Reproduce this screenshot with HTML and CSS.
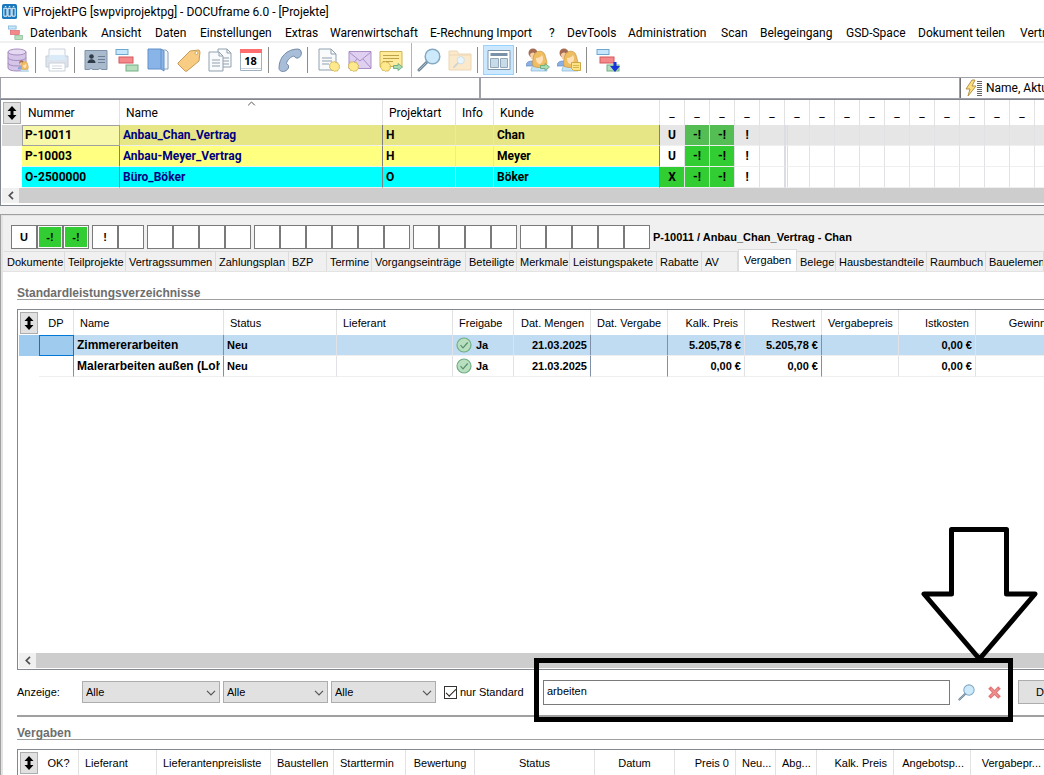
FILE: index.html
```html
<!DOCTYPE html>
<html lang="de">
  <head>
    <meta charset="utf-8" />
    <meta name="viewport" content="width=device-width, initial-scale=1.0" />
    <title>ViProjektPG - DOCUframe 6.0 - [Projekte]</title>
    <link rel="stylesheet" href="styles.css">
  </head>
  <body>
    <svg class="defs" width="0" height="0">
      <symbol id="gantt" viewBox="0 0 24 24">
        <rect x="1" y="1.5" width="12" height="5" fill="#c5e6fb" stroke="#6fa8cf" />
        <rect x="4" y="9" width="14" height="6" fill="#f4888a" stroke="#d2595c" />
        <rect x="11" y="17" width="12" height="6" fill="#b5dfbd" stroke="#75b083" />
      </symbol>
      <symbol id="lens" viewBox="0 0 24 24">
        <path d="M2 22 10 14" stroke="#6f8798" stroke-width="3" stroke-linecap="round" />
        <path d="M2 22 9 15" stroke="#a9c0d0" stroke-width="1" stroke-linecap="round" />
        <circle cx="15.500" cy="8.500" r="7.300" fill="#cdeafd" stroke="#84a9c2" stroke-width="1.500" />
      </symbol>
      <symbol id="sort" viewBox="0 0 9 14">
        <path d="M4.500 0 9 5H6v4h3l-4.500 5L0 9h3V5H0z" fill="#000" />
      </symbol>
      <symbol id="check" viewBox="0 0 16 16">
        <circle cx="8" cy="8" r="7" fill="#b9dfbe" stroke="#6fae86" stroke-width="1.200" />
        <path d="M4.500 8.200 7 10.800 11.700 5.500" fill="none" stroke="#549070" stroke-width="1.200" />
      </symbol>
      <symbol id="chevron" viewBox="0 0 10 6">
        <path d="M1 .8 5 4.800 9 .8" fill="none" stroke="#555" stroke-width="1.200" />
      </symbol>
      <symbol id="left" viewBox="0 0 6 9">
        <path d="M5 .8 1.300 4.500 5 8.200" fill="none" stroke="#505050" stroke-width="1.700" />
      </symbol>
      <symbol id="people" viewBox="0 0 24 24">
        <path d="M0 18c0-4 3-5 7-5l4 5z" fill="#8cb0e4" stroke="#6488c0" stroke-width=".7" />
        <circle cx="7" cy="5" r="4.500" fill="#a56b50" />
        <path d="M4 6c2-2 4-2 5 0v5H5z" fill="#f6d0aa" />
        <path d="M5 23c0-5 3-6 8-6s8 1 8 6z" fill="#c4e4f8" stroke="#87b3d4" stroke-width=".7" />
        <path d="M7 18c-1-4 0-7 1-11s9-6 11 0c1 4 3 8 1 11-2 2-10 2-13 0z" fill="#efbd62" stroke="#c9923c" stroke-width=".7" />
        <path d="M10 10c3 0 5-1 6-3 2 3 1 8-2 9-3 0-4-3-4-6z" fill="#ffe0b8" />
      </symbol>
      <symbol id="badge" viewBox="0 0 10 10">
        <path d="m5 .5 1.200 1 1.600-.2.500 1.500 1.300.9-.4 1.500.4 1.500-1.300.9-.5 1.500-1.600-.1L5 9.500l-1.200-1-1.600.1-.5-1.500-1.300-.9.400-1.500-.4-1.500 1.300-.9.500-1.500 1.600.2z" fill="#ffe98d" stroke="#cbb04e" stroke-width=".7" />
      </symbol>
      <symbol id="arrow" viewBox="0 0 10 8">
        <path d="M.5 2.500H5v-2L9.500 4 5 7.500v-2H.5z" fill="#aadcb4" stroke="#5fa577" stroke-width=".8" />
      </symbol>
    </svg>

    <header class="titlebar">
      <svg class="app-icon" viewBox="0 0 16 16">
        <rect width="16" height="16" rx="2" fill="#1877bd" />
        <path d="M2 4.500h3.300V13H2zM6.400 4.500h3.300V13H6.400zM10.800 4.500H14V13h-3.200z" fill="none" stroke="#fff" stroke-width="1" />
        <path d="M3 2.700h1.500M7.300 2.700h1.500M11.600 2.700h1.500" stroke="#fff" />
      </svg>
      <span>ViProjektPG [swpviprojektpg] - DOCUframe 6.0 - [Projekte]</span>
    </header>

    <nav class="menubar">
      <svg><use href="#gantt" /></svg>
      <a href="#">Datenbank</a>
      <a href="#">Ansicht</a>
      <a href="#">Daten</a>
      <a href="#">Einstellungen</a>
      <a href="#">Extras</a>
      <a href="#">Warenwirtschaft</a>
      <a href="#">E-Rechnung Import</a>
      <a href="#">?</a>
      <a href="#">DevTools</a>
      <a href="#">Administration</a>
      <a href="#">Scan</a>
      <a href="#">Belegeingang</a>
      <a href="#">GSD-Space</a>
      <a href="#">Dokument teilen</a>
      <a href="#">Vertrieb</a>
    </nav>

    <div class="toolbar">
      <button aria-label="Datenbank">
        <svg viewBox="0 0 24 24">
          <path d="M2 4v16c0 4 18 4 18 0V4z" fill="#d5c5e8" stroke="#a68dc0" />
          <ellipse cx="11" cy="4" rx="9" ry="3" fill="#e5d9f2" stroke="#a68dc0" />
          <path d="M2 9.500c0 4 18 4 18 0M2 15c0 4 18 4 18 0" fill="none" stroke="#a68dc0" />
          <use href="#people" x="12" y="12" width="12" height="12" />
        </svg>
      </button>
      <span class="sep"></span>
      <button aria-label="Drucken" class="off">
        <svg viewBox="0 0 24 24">
          <path d="M4 1h16v8H4z" fill="#f6f8fa" stroke="#8e9bac" />
          <path d="M1 8h22v11H1z" fill="#b5c5d8" stroke="#8195ad" />
          <path d="M4 7h16v5H4z" fill="#acd2f0" />
          <path d="M4 15h16v8H4z" fill="#fff" stroke="#8e9bac" />
          <path d="M7 18h10M7 20.500h10" stroke="#9cabbb" />
        </svg>
      </button>
      <span class="sep"></span>
      <button aria-label="Adressen">
        <svg viewBox="0 0 24 24">
          <path d="M1 2.500h22v19h-5l-2-1-2 1H9l-2-1-2 1H1z" fill="#a9bacd" stroke="#7d92a9" />
          <circle cx="7.500" cy="8.500" r="2.300" fill="#303b48" />
          <path d="M3.500 15c0-5 8-5 8 0z" fill="#303b48" />
          <path d="M14 8.500h7M14 11.500h7M14 14.500h7" stroke="#687d93" />
        </svg>
      </button>
      <button aria-label="Projekte"><svg><use href="#gantt" /></svg></button>
      <button aria-label="Katalog">
        <svg viewBox="0 0 24 24">
          <path d="M15 2h5l2 2v17h-6z" fill="#f4f7fa" stroke="#8ca0b5" />
          <path d="M2 1h13l3 2v20l-3-2H2z" fill="#88b4e8" stroke="#6390c8" />
          <path d="M15 1v20" stroke="#6390c8" />
        </svg>
      </button>
      <button aria-label="Artikel">
        <svg viewBox="0 0 24 24">
          <path d="m1 15 12-12 9-1 1 2-1 9-12 10q-2 1-3-1l-6-6z" fill="#f8cd83" stroke="#c79b55" stroke-linejoin="round" />
          <circle cx="19.500" cy="5" r="1.500" fill="#fff" stroke="#c79b55" stroke-width=".8" />
        </svg>
      </button>
      <button aria-label="Dokumente">
        <svg viewBox="0 0 24 24">
          <path d="M10 1h9l4 4v14H10z" fill="#f8fafb" stroke="#91a1b0" />
          <path d="M19 1v4h4M13 10h8M13 13h8M13 16h8" fill="none" stroke="#91a1b0" />
          <path d="M1 4h10l4 4v15H1z" fill="#f8fafb" stroke="#91a1b0" />
          <path d="M11 4v4h4M4 12h8M4 15h8M4 18h8" fill="none" stroke="#91a1b0" />
        </svg>
      </button>
      <button aria-label="Kalender" class="calendar">
        <svg viewBox="0 0 24 24">
          <path d="M1.500 1.500h21v21h-21z" fill="#fff" stroke="#a0b1c0" />
          <path d="M1 1h22v4H1z" fill="#ff6e6e" />
          <path d="M2 20.500h20" stroke="#c9d4de" />
        </svg>
        <span>18</span>
      </button>
      <span class="sep"></span>
      <button aria-label="Telefon">
        <svg viewBox="0 0 24 24">
          <path d="M1 20C1 9 9 1 20 1q3 0 3.500 4 0 3-3 5-3 1-4.500-2c-3 .5-7 4-7.500 7.500q3 1.500 2 4.500-2 3.500-5 3.500Q1 23.500 1 20z" fill="#a7bdd8" stroke="#748cab" stroke-linejoin="round" />
        </svg>
      </button>
      <span class="sep"></span>
      <button aria-label="Neues Dokument">
        <svg viewBox="0 0 24 24">
          <path d="M2 1h12l5 5v16H2z" fill="#f8fafb" stroke="#91a1b0" />
          <path d="M14 1v5h5M5 10h10M5 13h10M5 16h7" fill="none" stroke="#91a1b0" />
          <use href="#badge" x="12" y="13" width="11" height="11" />
        </svg>
      </button>
      <button aria-label="Neue E-Mail">
        <svg viewBox="0 0 24 24">
          <path d="M1 3.500h22v17H1z" fill="#dfcff0" stroke="#a98fc6" />
          <path d="m1 4 11 9L23 4M1 20l8-9M23 20l-8-9" fill="none" stroke="#a98fc6" />
          <use href="#badge" x="0" y="13" width="11" height="11" />
        </svg>
      </button>
      <button aria-label="Neue Notiz">
        <svg viewBox="0 0 24 24">
          <path d="M1 3.500h22v15H1z" fill="#ffeb9b" stroke="#cfb555" />
          <path d="M4 7.500h16M4 10.500h16M4 13.500h10" stroke="#bda24a" />
          <use href="#badge" x="1" y="13" width="11" height="11" />
          <use href="#arrow" x="14" y="15" width="10" height="8" />
        </svg>
      </button>
      <span class="sep long"></span>
      <button aria-label="Suchen"><svg><use href="#lens" /></svg></button>
      <button aria-label="Ordner durchsuchen" class="off">
        <svg viewBox="0 0 24 24">
          <path d="M1 3h8l2 3h12v16H1z" fill="#f8cf8e" stroke="#d6a760" />
          <path d="M1 7h22" stroke="#d6a760" />
          <use href="#lens" x="5" y="8" width="12" height="12" />
        </svg>
      </button>
      <span class="sep"></span>
      <button aria-label="Fensteransicht" class="active">
        <svg viewBox="0 0 24 24">
          <path d="M1 2.500h22v19H1z" fill="#fff" stroke="#7f97ad" />
          <path d="M3.500 5h17v3h-17z" fill="#7891a8" />
          <path d="M3.500 10.500h8v9h-8zM13.500 10.500h7v9h-7z" fill="#c8dbe9" stroke="#92a8ba" />
        </svg>
      </button>
      <span class="sep"></span>
      <button aria-label="Kontakt weiterleiten">
        <svg viewBox="0 0 24 24">
          <use href="#people" width="24" height="24" />
          <use href="#arrow" x="14" y="15" width="10" height="8" />
        </svg>
      </button>
      <button aria-label="Kontakt Notiz">
        <svg viewBox="0 0 24 24">
          <use href="#people" width="24" height="24" />
          <path d="M14.500 14.500h9v8h-7l-2-2z" fill="#ffe384" stroke="#cda945" />
          <path d="M16 17.500h6M16 19.500h6" stroke="#cda945" stroke-width=".8" />
        </svg>
      </button>
      <span class="sep"></span>
      <button aria-label="Projekt einfügen">
        <svg viewBox="0 0 24 24">
          <use href="#gantt" width="24" height="24" />
          <path d="M17.500 14h3v4H24l-5 6-5-6h3.500z" fill="#1735d8" />
        </svg>
      </button>
    </div>

    <div class="quickbar">
      <input type="text" aria-label="Schnellsuche">
      <input type="text" aria-label="Volltextsuche">
      <button>
        <svg viewBox="0 0 18 18">
          <path d="M7 1 1 10h4l-2 7 8-10H7l3-6z" fill="#ffe07a" stroke="#b5924a" />
          <path d="M12 2.500h5M12 4.500h5M12 6.500h5M12 8.500h5M12 10.500h5M12 12.500h5M12 14.500h5M12 16.500h5" stroke="#666" />
        </svg>
        <span>Name, Aktuell</span>
      </button>
    </div>

    <section class="projects">
      <table class="grid">
        <colgroup>
          <col class="w20"><col class="w98"><col class="w263"><col class="w73"><col class="w38"><col class="w166">
          <col class="w25" span="16">
        </colgroup>
        <thead>
          <tr>
            <th class="corner"><svg><use href="#sort" /></svg></th>
            <th>Nummer</th>
            <th class="sorted">Name<svg><use href="#chevron" /></svg></th>
            <th>Projektart</th><th>Info</th><th>Kunde</th>
            <th>_</th><th>_</th><th>_</th><th>_</th><th>_</th><th>_</th><th>_</th><th>_</th>
            <th>_</th><th>_</th><th>_</th><th>_</th><th>_</th><th>_</th><th>_</th><th></th>
          </tr>
        </thead>
        <tbody>
          <tr class="selected">
            <td></td><td class="focus">P-10011</td><td class="name">Anbau_Chan_Vertrag</td><td>H</td><td></td><td class="edge">Chan</td>
            <td>U</td><td class="ok">-!</td><td class="ok">-!</td><td>!</td><td class="wide"></td><td class="double"></td>
            <td></td><td></td><td></td><td></td><td></td><td></td><td></td><td></td><td></td><td></td>
          </tr>
          <tr class="yellow">
            <td></td><td class="edge">P-10003</td><td class="name">Anbau-Meyer_Vertrag</td><td>H</td><td></td><td class="edge">Meyer</td>
            <td>U</td><td class="ok">-!</td><td class="ok">-!</td><td>!</td><td class="wide"></td><td class="double"></td>
            <td></td><td></td><td></td><td></td><td></td><td></td><td></td><td></td><td></td><td></td>
          </tr>
          <tr class="cyan">
            <td></td><td class="edge">O-2500000</td><td class="name">Büro_Böker</td><td>O</td><td></td><td class="edge">Böker</td>
            <td class="ok">X</td><td class="ok">-!</td><td class="ok">-!</td><td>!</td><td class="wide"></td><td class="double"></td>
            <td></td><td></td><td></td><td></td><td></td><td></td><td></td><td></td><td></td><td></td>
          </tr>
        </tbody>
      </table>
      <div class="scrollbar"><button aria-label="Nach links"><svg><use href="#left" /></svg></button></div>
    </section>

    <main class="detail">
      <div class="flags">
        <div class="flag-group"><span>U</span><span class="on">-!</span><span class="on">-!</span></div>
        <div class="flag-group"><span>!</span><span></span></div>
        <div class="flag-group"><span></span><span></span><span></span><span></span></div>
        <div class="flag-group"><span></span><span></span><span></span><span></span><span></span><span></span></div>
        <div class="flag-group"><span></span><span></span><span></span><span></span></div>
        <div class="flag-group"><span></span><span></span><span></span><span></span><span></span></div>
        <strong>P-10011 / Anbau_Chan_Vertrag - Chan</strong>
      </div>

      <div class="tabs">
        <button>Dokumente</button>
        <button>Teilprojekte</button>
        <button>Vertragssummen</button>
        <button>Zahlungsplan</button>
        <button>BZP</button>
        <button>Termine</button>
        <button>Vorgangseinträge</button>
        <button>Beteiligte</button>
        <button>Merkmale</button>
        <button>Leistungspakete</button>
        <button>Rabatte</button>
        <button>AV</button>
        <button class="current">Vergaben</button>
        <button>Belege</button>
        <button>Hausbestandteile</button>
        <button>Raumbuch</button>
        <button>Bauelemente</button>
      </div>

      <div class="page">
        <h2>Standardleistungsverzeichnisse</h2>
        <div class="pane main-pane">
          <table class="grid small">
            <colgroup>
              <col class="w20"><col class="w35"><col class="w150"><col class="w113"><col class="w116"><col class="w61">
              <col class="w77" span="7">
            </colgroup>
            <thead>
              <tr>
                <th class="corner"><svg><use href="#sort" /></svg></th>
                <th class="center">DP</th><th>Name</th><th>Status</th><th>Lieferant</th><th>Freigabe</th>
                <th class="num">Dat. Mengen</th><th class="num">Dat. Vergabe</th><th class="num">Kalk. Preis</th>
                <th class="num">Restwert</th><th class="num">Vergabepreis</th><th class="num">Istkosten</th><th class="num">Gewinn</th>
              </tr>
            </thead>
            <tbody>
              <tr class="picked">
                <td></td><td class="focus"></td><td class="edge"><span class="title">Zimmererarbeiten</span></td><td>Neu</td><td></td>
                <td><span class="state"><svg><use href="#check" /></svg>Ja</span></td>
                <td class="num edge">21.03.2025</td><td class="edge"></td><td class="num">5.205,78 €</td><td class="num edge">5.205,78 €</td>
                <td></td><td class="num">0,00 €</td><td></td>
              </tr>
              <tr>
                <td></td><td class="edge"></td><td class="edge"><span class="title">Malerarbeiten außen (Lohn)</span></td><td>Neu</td><td></td>
                <td><span class="state"><svg><use href="#check" /></svg>Ja</span></td>
                <td class="num edge">21.03.2025</td><td class="edge"></td><td class="num">0,00 €</td><td class="num edge">0,00 €</td>
                <td></td><td class="num">0,00 €</td><td></td>
              </tr>
            </tbody>
          </table>
          <div class="scrollbar"><button aria-label="Nach links"><svg><use href="#left" /></svg></button></div>
        </div>

        <div class="filter">
          <label for="art">Anzeige:</label>
          <div class="select first">
            <select id="art"><option>Alle</option></select>
            <svg><use href="#chevron" /></svg>
          </div>
          <div class="select">
            <select aria-label="Status"><option>Alle</option></select>
            <svg><use href="#chevron" /></svg>
          </div>
          <div class="select">
            <select aria-label="Lieferant"><option>Alle</option></select>
            <svg><use href="#chevron" /></svg>
          </div>
          <label class="tick"><input type="checkbox" checked>nur Standard</label>
          <div class="search">
            <input type="text" value="arbeiten" aria-label="Suchtext">
            <button aria-label="Suchen"><svg><use href="#lens" /></svg></button>
            <button aria-label="Suche löschen">
              <svg viewBox="0 0 16 16">
                <path d="m4.500 4.500 7 7M11.500 4.500l-7 7" stroke="#e37878" stroke-width="3.500" stroke-linecap="square" />
                <path d="m4.500 4.500 7 7M11.500 4.500l-7 7" stroke="#ee9090" stroke-width="1.500" />
              </svg>
            </button>
            <div class="frame"></div>
            <svg class="pointer" viewBox="0 0 118 136">
              <path d="M31.500 3.500h55V68H115L59.500 133 4 68h27.500z" fill="none" stroke="#000" stroke-width="5" stroke-linejoin="round" />
            </svg>
          </div>
          <button class="print">Drucken</button>
        </div>

        <h2>Vergaben</h2>
        <div class="pane">
          <table class="grid small">
            <colgroup>
              <col class="w20"><col class="w40"><col class="w78"><col class="w114"><col class="w63"><col class="w72"><col class="w69">
              <col class="w120"><col class="w80"><col class="w61"><col class="w40"><col class="w41"><col class="w77" span="3">
            </colgroup>
            <thead>
              <tr>
                <th class="corner"><svg><use href="#sort" /></svg></th>
                <th class="center">OK?</th><th>Lieferant</th><th>Lieferantenpreisliste</th><th>Baustellen</th><th>Starttermin</th>
                <th class="center">Bewertung</th><th class="center">Status</th><th class="center">Datum</th><th class="num">Preis 0</th>
                <th>Neu...</th><th>Abg...</th><th class="num">Kalk. Preis</th><th class="num">Angebotsp...</th><th class="num">Vergabepr...</th>
              </tr>
            </thead>
          </table>
        </div>
      </div>
    </main>
  </body>
</html>
```

FILE: styles.css
```css
* {
  box-sizing: border-box;
}

body {
  margin: 0;
  height: 100vh;
  display: flex;
  flex-direction: column;
  overflow: hidden;
  background: #fff;
  color: #000;
  font-family: Roboto, "Open Sans", sans-serif;
  font-size: 12px;
  white-space: nowrap;
}

button,
input,
select {
  font: inherit;
  color: inherit;
  margin: 0;
  padding: 0;
  border: 0;
  border-radius: 0;
  background: none;
}

svg {
  display: block;
  flex: none;
}

.defs {
  position: absolute;
}

/* title and menu */
.titlebar {
  flex: none;
  height: 23px;
  display: flex;
  align-items: center;
  gap: 6px;
  padding-left: 2px;
}

.app-icon {
  width: 15px;
  height: 15px;
}

.menubar {
  flex: none;
  height: 20px;
  display: grid;
  grid-template-columns: 22px 71px 54px 45px 85px 45px 100px 119px 18px 61px 93px 39px 86px 72px 102px 1fr;
  align-items: center;
  padding: 1px 0 0 8px;
  overflow: hidden;
  border-bottom: 2px solid #f0f0f0;
}

.menubar svg {
  width: 15px;
  height: 15px;
}

.menubar a {
  min-width: 0;
  color: #000;
  text-decoration: none;
}

/* toolbar */
.toolbar {
  flex: none;
  height: 34px;
  display: flex;
  align-items: center;
  padding-left: 2px;
}

.toolbar button {
  flex: none;
  width: 31px;
  height: 30px;
  display: grid;
  place-items: center;
}

.toolbar svg {
  width: 24px;
  height: 24px;
}

.toolbar .off {
  opacity: 0.45;
}

.toolbar .active {
  background: #cce8ff;
  border: 1px solid #99d1ff;
}

.calendar svg,
.calendar span {
  grid-area: 1 / 1;
}

.calendar span {
  font-family: "Open Sans", sans-serif;
  font-size: 11px;
  font-weight: bold;
}

.sep {
  flex: none;
  width: 1px;
  height: 26px;
  margin: 0 5px 0 2px;
  background: #8c8c8c;
}

.sep.long {
  height: 34px;
  margin: 0 1px 0 5px;
  background: #b4b4b8;
}

.quickbar {
  flex: none;
  height: 22px;
  display: grid;
  grid-template-columns: 480px 480px 1fr;
  border-top: 1px solid #a0a0a8;
  border-bottom: 1px solid #a0a0a8;
}

.quickbar input {
  min-width: 0;
  padding: 0 4px;
  border-left: 1px solid #a0a0a8;
  border-right: 1px solid #a0a0a8;
}

.quickbar button {
  display: flex;
  align-items: center;
  gap: 3px;
  padding-left: 4px;
  border-left: 1px solid #707070;
  overflow: hidden;
}

.quickbar svg {
  width: 18px;
  height: 18px;
}

/* grids */
.grid {
  table-layout: fixed;
  width: 1px;
  border-collapse: separate;
  border-spacing: 0;
}

.grid th {
  height: 25px;
  padding: 0 6px;
  font-weight: normal;
  text-align: left;
  border-right: 1px solid #e2e2e2;
}

.grid td {
  height: 21px;
  padding: 0 3px;
  font-weight: bold;
  line-height: 16px;
  overflow: hidden;
  border-right: 1px solid #e2e2e6;
  border-bottom: 1px solid #efefef;
}

.grid td:first-child {
  border-color: transparent;
}

.grid .edge {
  border-right-color: #808080;
}

.grid .corner {
  padding: 0 0 0 1px;
  border-right: 0;
}

.corner svg {
  width: 18px;
  height: 22px;
  padding: 3px;
  background: #e1e1e1;
  border: 1px solid #adadad;
}

.w20 { width: 20px; }
.w25 { width: 25px; }
.w35 { width: 35px; }
.w38 { width: 38px; }
.w40 { width: 40px; }
.w41 { width: 41px; }
.w61 { width: 61px; }
.w63 { width: 63px; }
.w69 { width: 69px; }
.w72 { width: 72px; }
.w73 { width: 73px; }
.w77 { width: 77px; }
.w78 { width: 78px; }
.w80 { width: 80px; }
.w98 { width: 98px; }
.w113 { width: 113px; }
.w114 { width: 114px; }
.w116 { width: 116px; }
.w120 { width: 120px; }
.w150 { width: 150px; }
.w166 { width: 166px; }
.w263 { width: 263px; }

.projects {
  flex: none;
  height: 107px;
  padding-left: 1px;
  border: 1px solid #828790;
  border-right: 0;
  overflow: hidden;
}

.projects th:nth-child(n + 7),
.projects td:nth-child(n + 7) {
  padding: 0;
  text-align: center;
}

.projects .sorted {
  position: relative;
}

.sorted svg {
  position: absolute;
  top: 1px;
  left: calc(50% - 4px);
  width: 9px;
  height: 5px;
  transform: rotate(180deg);
}

.projects .name {
  color: #000080;
  border-right-color: #808080;
}

.selected td {
  background: #e6e6e6;
}

.selected td:first-child {
  background: #d9d9d9;
}

.selected td:nth-child(n + 2):nth-child(-n + 6) {
  background: #e6e686;
}

.selected td.focus:nth-child(2) {
  background: #f8f8aa;
  border-color: #a0a0a0;
  box-shadow: inset 1px 1px #a0a0a0;
}

.yellow td:nth-child(n + 2):nth-child(-n + 6) {
  background: #ffff80;
}

.cyan td:nth-child(n + 2):nth-child(-n + 6) {
  background: #00ffff;
}

.projects .ok {
  background: #32cd32;
}

.projects .selected .ok {
  background: #54be54;
}

.projects .wide {
  border-right-color: #dcdce4;
}

.projects .double {
  border-left: 3px double #dcdce4;
}

.scrollbar {
  flex: none;
  height: 15px;
  display: flex;
  background: #cdcdcd;
}

.scrollbar button {
  width: 17px;
  display: grid;
  place-items: center;
  background: #f0f0f0;
}

.scrollbar svg {
  width: 6px;
  height: 9px;
}

/* project detail */
.detail {
  flex: 1;
  min-height: 0;
  display: flex;
  flex-direction: column;
  border-top: 8px solid #f0f0f0;
  background: #f0f0f0;
  box-shadow: inset 1px 1px #a0a0a0, inset 3px 2px #e3e3e3;
  font-family: "Liberation Sans", Arial, sans-serif;
  font-size: 11px;
}

.flags {
  flex: none;
  display: flex;
  align-items: center;
  gap: 3px;
  padding: 11px 0 0 11px;
}

.flag-group {
  display: flex;
}

.flag-group span {
  width: 26px;
  height: 24px;
  display: grid;
  place-items: center;
  font-weight: bold;
  background: #fff;
  border: 1px solid #7a7a7a;
}

.flag-group .on {
  background: #32cd32;
  box-shadow: inset 0 0 0 1px #fff;
}

.tabs {
  flex: none;
  height: 22px;
  display: grid;
  grid-template-columns: 61px 61px 90px 73px 38px 45px 94px 51px 53px 87px 45px 36px 59px 39px 91px 59px 1fr;
  align-items: end;
  padding-left: 4px;
}

.tabs button {
  min-width: 0;
  height: 20px;
  padding: 0 3px;
  text-align: left;
  overflow: hidden;
  border-top: 1px solid #dcdcdc;
  border-right: 1px solid #dcdcdc;
}

.tabs .current {
  height: 22px;
  padding: 0 5px 2px;
  background: #fff;
  border-left: 1px solid #dcdcdc;
}

.page {
  flex: 1;
  min-height: 0;
  display: flex;
  flex-direction: column;
  margin-left: 3px;
  padding: 15px 0 0 14px;
  background: #fff;
  border-top: 1px solid #e3e3e3;
}

.page h2 {
  flex: none;
  height: 13px;
  margin: 0 0 9px;
  font-size: 12px;
  line-height: 12px;
  color: #6d6d6d;
  border-bottom: 1px solid #a0a0a0;
}

.pane {
  flex: none;
  padding-left: 1px;
  border: 1px solid #828790;
  border-right: 0;
  border-bottom: 0;
  overflow: hidden;
}

.main-pane {
  flex: 1;
  min-height: 0;
  display: flex;
  flex-direction: column;
  justify-content: space-between;
  padding-bottom: 1px;
  border-bottom: 1px solid #828790;
}

.grid .center {
  padding: 0;
  text-align: center;
}

.grid .num {
  text-align: right;
}

.title {
  display: block;
  overflow: hidden;
  font-size: 12px;
}

.small .edge {
  border-right-color: #8090a8;
}

.picked td {
  background: #c0dcf3;
}

.picked td:first-child,
.picked td.focus {
  background: #9fcbef;
}

.picked td.focus {
  border: 1px solid #0078d7;
}

.state {
  display: flex;
  align-items: center;
  gap: 4px;
}

.state svg {
  width: 16px;
  height: 16px;
}

/* filter row */
.filter {
  flex: none;
  display: flex;
  align-items: center;
  height: 47px;
  margin-bottom: 10px;
  padding-bottom: 1px;
  border-bottom: 2px solid #a0a0a0;
}

.filter > label:first-child {
  width: 65px;
}

.select {
  position: relative;
  width: 105px;
  margin-right: 3px;
}

.select.first {
  width: 138px;
}

.select select {
  appearance: none;
  display: block;
  width: 100%;
  height: 22px;
  padding: 0 3px;
  background: #e1e1e1;
  border: 1px solid #adadad;
}

.select svg {
  position: absolute;
  right: 4px;
  top: 9px;
  width: 10px;
  height: 6px;
  pointer-events: none;
}

.tick {
  display: flex;
  align-items: center;
  gap: 3px;
  width: 94px;
  padding-left: 5px;
}

.tick input {
  appearance: none;
  display: grid;
  place-items: center;
  width: 13px;
  height: 13px;
  border: 1px solid #333;
}

.tick input:checked::before {
  content: "";
  width: 9px;
  height: 4px;
  border: solid #222;
  border-width: 0 0 1px 1px;
  transform: translateY(-1px) rotate(-45deg);
}

.search {
  flex: 1;
  position: relative;
  display: flex;
  align-items: center;
  gap: 11px;
  margin-left: 10px;
  padding-right: 15px;
}

.search input {
  flex: 1;
  min-width: 0;
  height: 25px;
  margin-right: -3px;
  padding: 0 3px 2px;
  border: 1px solid #7a7a7a;
}

.search button svg {
  width: 17px;
  height: 17px;
}

/* annotation around the search field */
.frame {
  position: absolute;
  inset: -22px 5px -17px -9px;
  border: 5px solid #000;
  pointer-events: none;
}

.pointer {
  position: absolute;
  right: -20px;
  bottom: 43px;
  width: 118px;
  height: 136px;
  pointer-events: none;
}

.print {
  flex: none;
  width: 80px;
  height: 24px;
  margin-right: -54px;
  padding-left: 17px;
  text-align: left;
  background: #e1e1e1;
  border: 1px solid #adadad;
}
```
